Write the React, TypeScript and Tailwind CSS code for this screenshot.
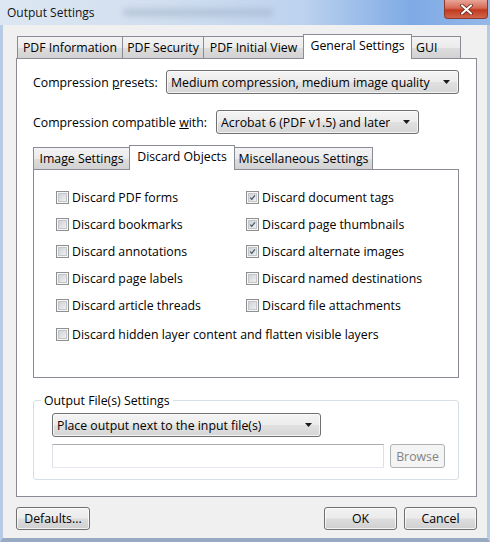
import { ReactNode } from 'react';

const outerTabs: { label: string; width: string; active?: boolean; left?: boolean }[] = [
    { label: 'PDF Information', width: 'w-[106px]' },
    { label: 'PDF Security', width: 'w-[82px]' },
    { label: 'PDF Initial View', width: 'w-[101px]' },
    { label: 'General Settings', width: 'w-[109px]', active: true },
    { label: 'GUI', width: 'w-[50px]', left: true },
];

const innerTabs: { label: string; width: string; active?: boolean; left?: boolean }[] = [
    { label: 'Image Settings', width: 'w-[97px]' },
    { label: 'Discard Objects', width: 'w-[106px]', active: true },
    { label: 'Miscellaneous Settings', width: 'w-[139px]' },
];

const discardRows: [string, boolean, string, boolean][] = [
    ['Discard PDF forms', false, 'Discard document tags', true],
    ['Discard bookmarks', false, 'Discard page thumbnails', true],
    ['Discard annotations', false, 'Discard alternate images', true],
    ['Discard page labels', false, 'Discard named destinations', false],
    ['Discard article threads', false, 'Discard file attachments', false],
];

function Arrow() {
    return (
        <svg width="7" height="4" viewBox="0 0 7 4" className="shrink-0">
            <path d="M0 0 H7 L3.5 4 Z" fill="#1a1a1a" />
        </svg>
    );
}

function Combo({ value, width }: { value: string; width: string }) {
    return (
        <div
            className={`flex h-[24px] ${width} shrink-0 items-center justify-between rounded-[3px] border border-[#707070] bg-[linear-gradient(to_bottom,#f4f4f4,#ececec_48%,#e0e0e0_52%,#d6d6d6)] pl-[4px] pr-[8px] shadow-[inset_0_0_0_1px_rgba(255,255,255,0.7)]`}
        >
            <span className="truncate">{value}</span>
            <Arrow />
        </div>
    );
}

function Button({ children, width, disabled }: { children: ReactNode; width: string; disabled?: boolean }) {
    return (
        <button
            type="button"
            className={`flex ${width} items-center justify-center rounded-[3px] border ${
                disabled
                    ? 'h-[24px] border-[#adb2b5] bg-[#f4f4f4] text-[#838383]'
                    : 'h-[23px] border-[#707070] bg-[linear-gradient(to_bottom,#f2f2f2,#ebebeb_48%,#dddddd_52%,#cfcfcf)] text-black shadow-[inset_0_0_0_1px_rgba(255,255,255,0.75)]'
            }`}
        >
            {children}
        </button>
    );
}

function CheckBox({ label, checked }: { label: string; checked: boolean }) {
    return (
        <label className="flex items-center">
            <span className="flex h-[13px] w-[13px] shrink-0 items-center justify-center border border-[#8f8f8f] bg-[#f6f6f6] p-[1px]">
                <span className="flex h-full w-full items-center justify-center border border-[#c3c6ca] bg-[linear-gradient(135deg,#cfd2d5,#eeeff0)]">
                    {checked ? (
                        <svg width="9" height="9" viewBox="0 0 9 9">
                            <path d="M1.5 4.6 L3.6 6.8 L7.6 1.8" fill="none" stroke="#465566" strokeWidth="1.6" />
                        </svg>
                    ) : null}
                </span>
            </span>
            <span className="ml-[3px] whitespace-nowrap">{label}</span>
        </label>
    );
}

function TabStrip({ tabs }: { tabs: typeof outerTabs }) {
    return (
        <div className="flex h-[24px] items-end">
            {tabs.map((tab, i) => (
                <div
                    key={tab.label}
                    className={`${tab.width} ${i > 0 ? '-ml-px' : ''} flex items-center ${
                        tab.left ? 'justify-start pl-[4px]' : 'justify-center'
                    } border border-[#898c95] border-b-0 whitespace-nowrap ${
                        tab.active
                            ? 'relative z-10 -mb-px h-[25px] bg-white pb-[3px]'
                            : 'h-[22px] bg-[linear-gradient(to_bottom,#f3f3f3,#ebebeb_50%,#dddddd_50%,#d2d2d2)]'
                    }`}
                >
                    {tab.label}
                </div>
            ))}
        </div>
    );
}

export default function App() {
    return (
        <div className="flex h-[542px] w-[490px] flex-col overflow-hidden bg-[#f0f0f0] font-['Open_Sans','Noto_Sans',sans-serif] text-[12.3px] leading-[17px] text-black">
            {/* title bar */}
            <div className="flex h-[25px] shrink-0 items-start bg-[linear-gradient(to_right,#dde7f3,#d3dfef_30%,#bcd2ee_62%,#7eaae5_84%,#95b8e8)]">
                <span className="mt-[4px] ml-[7px] text-[12px] text-[#141414]">Output Settings</span>
                {/* blurred background text showing through the glass */}
                <span className="mt-[9px] ml-[28px] h-[7px] w-[150px] rounded-full bg-[#9fb2c9] opacity-60 blur-[3px]" />
                <div className="mr-[2px] ml-auto flex h-[19px] w-[44px] items-center justify-center rounded-b-[4px] border border-t-0 border-[#8d3a2d] bg-[linear-gradient(to_bottom,#e9a597,#d56a55_45%,#c0391f_55%,#d0654a)]">
                    <svg width="13" height="11" viewBox="0 0 13 11">
                        <path d="M2 1.5 L11 9.5 M11 1.5 L2 9.5" stroke="#5a1a10" strokeWidth="3.6" strokeLinecap="round" />
                        <path d="M2 1.5 L11 9.5 M11 1.5 L2 9.5" stroke="#ffffff" strokeWidth="2.2" strokeLinecap="round" />
                    </svg>
                </div>
            </div>

            {/* body */}
            <div className="flex flex-1 flex-col border-x-[3px] border-b-[4px] border-x-[#b7cbe4] border-b-[#98aac2] pt-[9px] pr-[10px] pb-[8px] pl-[13px]">
                <div className="ml-px">
                    <TabStrip tabs={outerTabs} />
                </div>

                <div className="flex flex-1 flex-col border border-[#898c95] bg-white pt-[11px] pl-[16px]">
                    <div className="flex items-center">
                        <span className="w-[133px] shrink-0 whitespace-nowrap">
                            Compression <span className="underline">p</span>resets:
                        </span>
                        <Combo value="Medium compression, medium image quality" width="w-[293px]" />
                    </div>
                    <div className="mt-[16px] flex items-center">
                        <span className="w-[183px] shrink-0 whitespace-nowrap">
                            Compression compatible <span className="underline">w</span>ith:
                        </span>
                        <Combo value="Acrobat 6 (PDF v1.5) and later" width="w-[203px]" />
                    </div>

                    <div className="mt-[11px] w-[426px]">
                        <TabStrip tabs={innerTabs} />
                        <div className="h-[209px] border border-[#898c95] bg-white pt-[14px] pl-[22px]">
                            {discardRows.map(([l, lc, r, rc]) => (
                                <div key={l} className="grid h-[27px] grid-cols-[190px_1fr] items-center">
                                    <CheckBox label={l} checked={lc} />
                                    <CheckBox label={r} checked={rc} />
                                </div>
                            ))}
                            <div className="mt-[2px] flex h-[27px] items-center">
                                <CheckBox label="Discard hidden layer content and flatten visible layers" checked={false} />
                            </div>
                        </div>

                        <div className="relative mt-[22px] h-[80px] rounded-[3px] border border-[#d5dfe5] pt-[12px] pl-[18px]">
                            <span className="absolute -top-[9px] left-[7px] bg-white px-[3px]">Output File(s) Settings</span>
                            <Combo value="Place output next to the input file(s)" width="w-[269px]" />
                            <div className="mt-[7px] flex items-center">
                                <div className="h-[24px] w-[332px] border border-[#abadb3] border-x-[#dbdfe6] border-b-[#e3e9ef] bg-white" />
                                <div className="ml-[6px]">
                                    <Button width="w-[55px]" disabled>
                                        Browse
                                    </Button>
                                </div>
                            </div>
                        </div>
                    </div>
                </div>

                <div className="mt-[10px] flex items-center justify-between">
                    <Button width="w-[74px]">Defaults...</Button>
                    <div className="flex gap-[7px]">
                        <Button width="w-[73px]">OK</Button>
                        <Button width="w-[73px]">Cancel</Button>
                    </div>
                </div>
            </div>
        </div>
    );
}
